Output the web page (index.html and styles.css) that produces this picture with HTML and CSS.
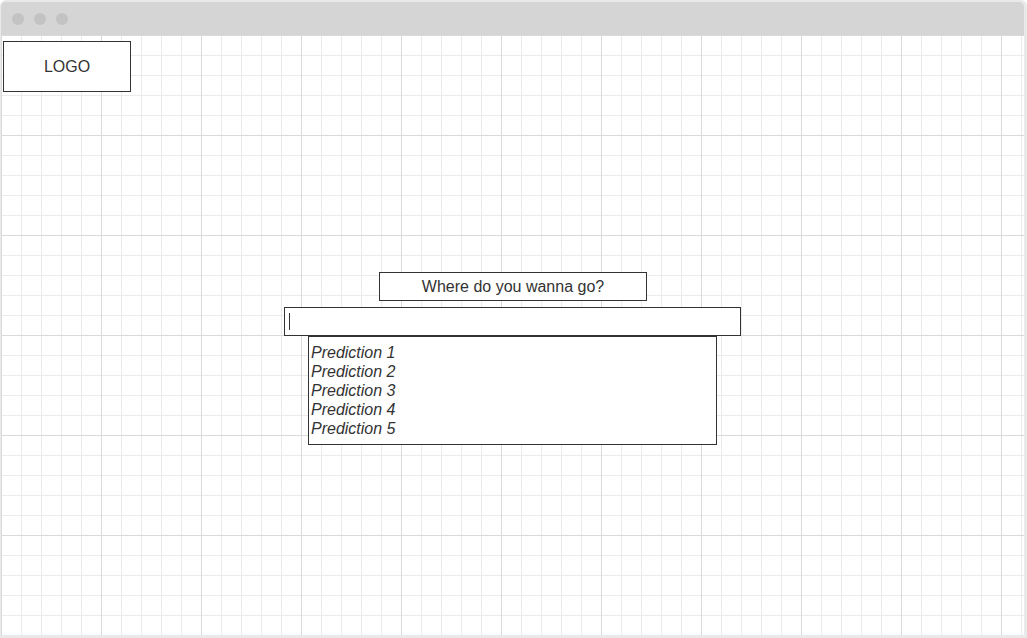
FILE: index.html
```html
<!DOCTYPE html>
<html lang="en">
<head>
<meta charset="utf-8">
<title>Wireframe</title>
<link rel="stylesheet" href="styles.css">
</head>
<body>
<div class="window">
  <div class="titlebar">
    <span class="dot"></span>
    <span class="dot"></span>
    <span class="dot"></span>
  </div>
  <div class="canvas">
    <div class="logo">LOGO</div>
    <div class="search">
      <div class="label">Where do you wanna go?</div>
      <div class="input"><span class="caret"></span></div>
      <ul class="predictions">
        <li>Prediction 1</li>
        <li>Prediction 2</li>
        <li>Prediction 3</li>
        <li>Prediction 4</li>
        <li>Prediction 5</li>
      </ul>
    </div>
  </div>
</div>
</body>
</html>
```

FILE: styles.css
```css
html, body {
  margin: 0;
  padding: 0;
  background: #ffffff;
}

body {
  font-family: "Liberation Sans", Arial, sans-serif;
  color: #333333;
}

.window {
  width: 1027px;
  height: 638px;
  box-sizing: border-box;
  padding: 2px 3px 3px 1px;
  background: #e9e9e9;
  border-radius: 6px 6px 0 0;
  display: flex;
  flex-direction: column;
}

.titlebar {
  height: 33px;
  flex: none;
  background: #d5d5d5;
  border-radius: 5px 5px 0 0;
  display: flex;
  align-items: center;
  gap: 10px;
  padding-left: 11px;
}

.dot {
  width: 12px;
  height: 12px;
  border-radius: 50%;
  background: #c3c3c3;
}

.canvas {
  flex: 1;
  background-color: #ffffff;
  background-image:
    linear-gradient(to right, #dadada 1px, transparent 1px),
    linear-gradient(to bottom, #dadada 1px, transparent 1px),
    linear-gradient(to right, #ebebeb 1px, transparent 1px),
    linear-gradient(to bottom, #ebebeb 1px, transparent 1px);
  background-size: 100px 100px, 100px 100px, 20px 20px, 20px 20px;
  padding: 6px 0 0 2px;
  box-sizing: border-box;
  display: flex;
  flex-direction: column;
}

.logo {
  width: 128px;
  height: 51px;
  box-sizing: border-box;
  border: 1px solid #333333;
  background: #ffffff;
  display: flex;
  align-items: center;
  justify-content: center;
  font-size: 16px;
}

.search {
  margin-top: 180px;
  margin-left: -2px;
  display: flex;
  flex-direction: column;
  align-items: center;
}

.label {
  width: 268px;
  height: 29px;
  box-sizing: border-box;
  border: 1px solid #333333;
  background: #ffffff;
  display: flex;
  align-items: center;
  justify-content: center;
  font-size: 16px;
  margin-left: 1px;
}

.input {
  margin-top: 6px;
  width: 457px;
  height: 29px;
  box-sizing: border-box;
  border: 1px solid #333333;
  background: #ffffff;
  display: flex;
  align-items: flex-start;
  padding: 5px 0 0 4px;
}

.caret {
  width: 1px;
  height: 17px;
  background: #333333;
}

.predictions {
  list-style: none;
  margin: 0;
  width: 409px;
  height: 109px;
  box-sizing: border-box;
  border: 1px solid #333333;
  background: #ffffff;
  padding: 6px 0 0 2px;
  font-size: 16px;
  font-style: italic;
  line-height: 19px;
}
```
